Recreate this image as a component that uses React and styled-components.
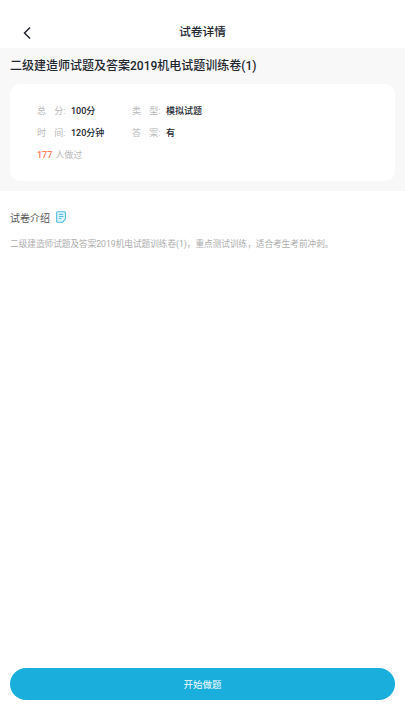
import React from "react";
import styled, { createGlobalStyle } from "styled-components";

const Global = createGlobalStyle`
  html, body { margin: 0; padding: 0; background: #fff; }
  body { font-family: Roboto, "Noto Sans CJK SC", sans-serif; }
  * { box-sizing: border-box; }
`;

const Page = styled.div`
  width: 405px;
  height: 720px;
  display: flex;
  flex-direction: column;
  overflow: hidden;
  background: #fff;
`;

const Header = styled.header`
  height: 48px;
  flex: none;
  padding-top: 16px;
  position: relative;
  text-align: center;
`;

const Back = styled.button`
  position: absolute;
  left: 21px;
  top: 25px;
  width: 12px;
  height: 16px;
  padding: 0;
  border: 0;
  background: none;
  display: flex;
`;

const Title = styled.h1`
  margin: 0;
  font-size: 11.75px;
  font-weight: 500;
  line-height: 32px;
  color: #23262f;
`;

const Summary = styled.section`
  height: 143px;
  flex: none;
  background: #f8f8f8;
  padding: 8px 10px 0;
`;

const PaperName = styled.h2`
  margin: 0 0 8px;
  font-size: 12px;
  font-weight: 500;
  line-height: 20px;
  color: #23262f;
  white-space: nowrap;
`;

const Card = styled.div`
  height: 97px;
  background: #fff;
  border-radius: 10px;
  padding: 16px 27px 0;
`;

const Grid = styled.div`
  display: grid;
  grid-template-columns: 95px 1fr;
  grid-auto-rows: 22px;
`;

const Item = styled.div`
  display: flex;
  align-items: center;
  font-size: 9px;
  line-height: 22px;
`;

const Label = styled.span`
  width: 28.5px;
  margin-right: 5.5px;
  flex: none;
  display: flex;
  justify-content: space-between;
  color: #b9b9b9;
`;

const Value = styled.span`
  color: #23262f;
  font-weight: 500;
`;

const Done = styled.div`
  font-size: 9px;
  line-height: 22px;
  color: #b9b9b9;
`;

const Count = styled.span`
  color: #ff7a55;
  font-weight: 500;
  margin-right: 3px;
`;

const Intro = styled.section`
  flex: 1;
  padding: 16px 10px 0;
`;

const IntroHead = styled.div`
  display: flex;
  align-items: center;
  gap: 6px;
  height: 20px;
  font-size: 10px;
  color: #555;
`;

const IntroBody = styled.p`
  margin: 8px 0 0;
  font-size: 8.65px;
  line-height: 18px;
  color: #adadad;
  white-space: nowrap;
`;

const Footer = styled.footer`
  flex: none;
  height: 52.5px;
  padding: 0 10px;
`;

const Start = styled.button`
  width: 385px;
  height: 32px;
  border: 0;
  border-radius: 16px;
  background: #19aedb;
  color: #f4fbfe;
  font-family: inherit;
  font-size: 9.5px;
  font-weight: 400;
  padding: 0;
`;

const rows = [
  [["总", "分"], "100分", ["类", "型"], "模拟试题"],
  [["时", "间"], "120分钟", ["答", "案"], "有"],
];

const FieldLabel = ({ parts }) => (
  <Label>
    <span>{parts[0]}</span>
    <span>{parts[1]}:</span>
  </Label>
);

const DocIcon = () => (
  <svg width="10" height="12" viewBox="0 0 10 12" fill="none">
    <path d="M1.500 .8H8.600a.8.8 0 0 1 .8.8V8L6.600 11.200H1.500a.8.8 0 0 1-.8-.8V1.600a.8.8 0 0 1 .8-.8Z" fill="#e3f5fb" stroke="#4dbde3" strokeWidth="1.100" />
    <path d="M2.800 3.400H7.400M2.800 5.500H7.400M2.800 7.600H5.500" stroke="#4dbde3" strokeWidth="1" />
  </svg>
);

export default function App() {
  return (
    <Page>
      <Global />
      <Header>
        <Back aria-label="返回">
          <svg width="12" height="16" viewBox="0 0 12 16" fill="none">
            <path d="M8.500 3 3.500 8l5 5" stroke="#23262f" strokeWidth="1.500" strokeLinecap="square" />
          </svg>
        </Back>
        <Title>试卷详情</Title>
      </Header>
      <Summary>
        <PaperName>二级建造师试题及答案2019机电试题训练卷(1)</PaperName>
        <Card>
          <Grid>
            {rows.map((r) => (
              <React.Fragment key={r[1]}>
                <Item>
                  <FieldLabel parts={r[0]} />
                  <Value>{r[1]}</Value>
                </Item>
                <Item>
                  <FieldLabel parts={r[2]} />
                  <Value>{r[3]}</Value>
                </Item>
              </React.Fragment>
            ))}
          </Grid>
          <Done>
            <Count>177</Count>人做过
          </Done>
        </Card>
      </Summary>
      <Intro>
        <IntroHead>
          试卷介绍
          <DocIcon />
        </IntroHead>
        <IntroBody>二级建造师试题及答案2019机电试题训练卷(1)，重点测试训练，适合考生考前冲刺。</IntroBody>
      </Intro>
      <Footer>
        <Start>开始做题</Start>
      </Footer>
    </Page>
  );
}
